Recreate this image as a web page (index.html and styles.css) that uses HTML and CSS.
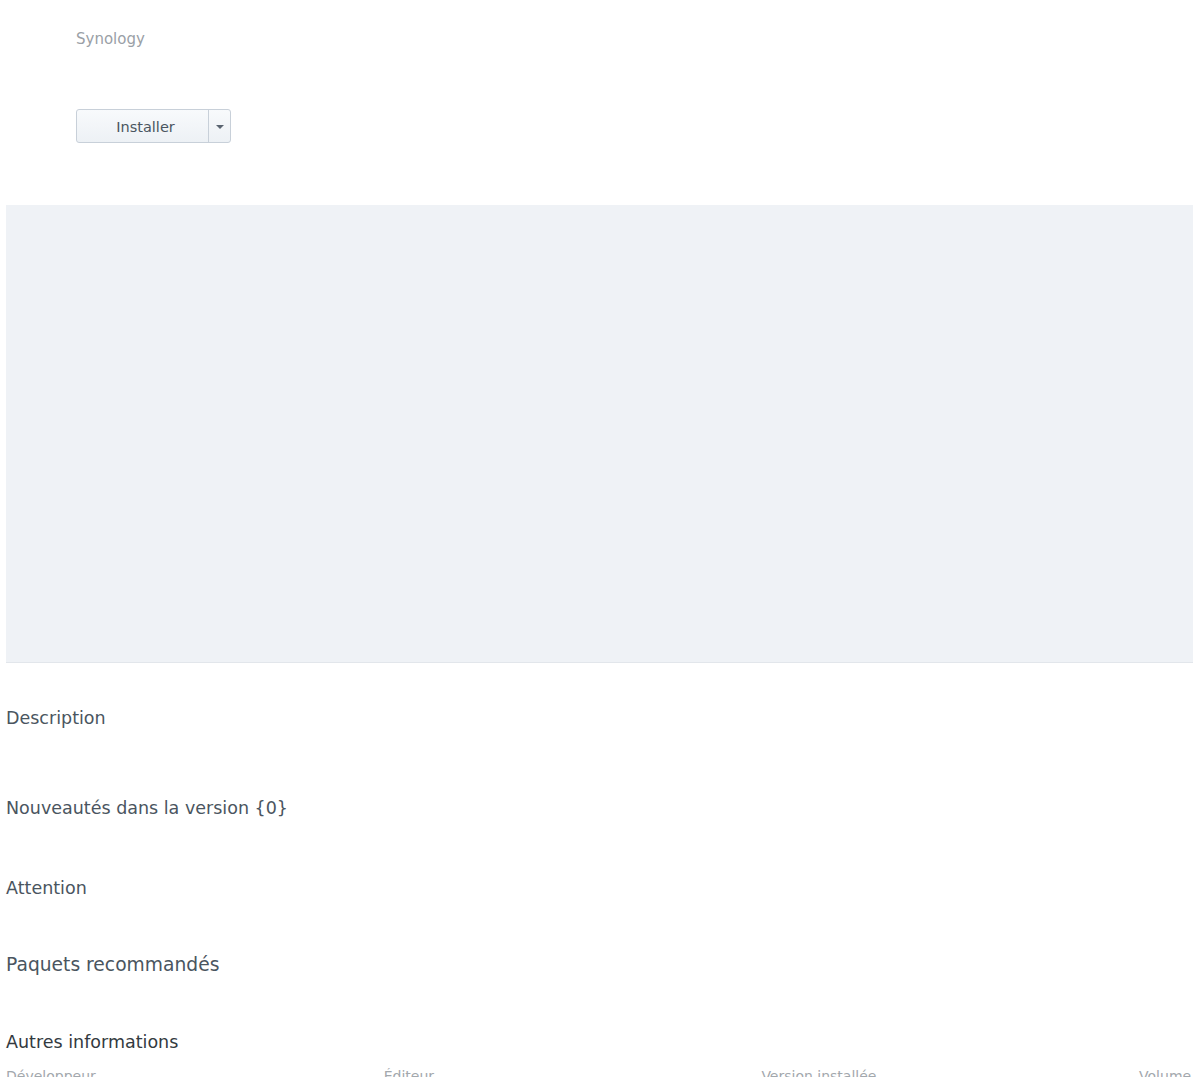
FILE: index.html
```html
<!DOCTYPE html>
<html lang="fr">
<head>
    <title>Synology</title>
    <link rel="stylesheet" href="styles.css">
</head>
<body>
    <div class="head">
        <p class="vendor">Synology</p>
        <div class="split_button">
            <button class="main_action">Installer</button>
            <button class="arrow_action">
                <svg width="8" height="5" viewBox="0 0 8 5"><path d="M0 0 L8 0 L4 4 Z" fill="#5a6470"/></svg>
            </button>
        </div>
    </div>

    <div class="screens"></div>

    <h3 class="section">Description</h3>
    <h3 class="section news">Nouveautés dans la version {0}</h3>
    <h3 class="section attention">Attention</h3>
    <h2 class="recommended">Paquets recommandés</h2>
    <h3 class="other">Autres informations</h3>

    <div class="info_grid">
        <div class="info_label">Développeur</div>
        <div class="info_label">Éditeur</div>
        <div class="info_label">Version installée</div>
        <div class="info_label">Volume</div>
    </div>
</body>
</html>
```

FILE: styles.css
```css
html, body{
    margin:0;
    padding:0;
    overflow:hidden;
}

body{
    background-color:white;
    font-family:"DejaVu Sans", Verdana, sans-serif;
    color:#4a5560;
    padding-left:6px;
}

.head{
    padding-left:70px;
    padding-top:29px;
}

.vendor{
    margin:0;
    font-size:15px;
    line-height:20px;
    color:#9aa0a6;
}

.split_button{
    display:flex;
    margin-top:60px;
    width:155px;
    height:34px;
    box-sizing:border-box;
    border:1px solid #c8d0d9;
    border-radius:3px;
    background:linear-gradient(#f8fafc, #edf1f5);
    overflow:hidden;
}

.split_button button{
    border:none;
    background:transparent;
    margin:0;
    padding:0;
    font-family:inherit;
    color:#4a5560;
}

.main_action{
    width:132px;
    font-size:14.5px;
    padding-left:6px !important;
    padding-top:2px !important;
    border-right:1px solid #c8d0d9 !important;
}

.arrow_action{
    flex:1;
    display:flex;
    align-items:center;
    justify-content:center;
    padding-top:2px !important;
}

.screens{
    margin-top:62px;
    height:457px;
    background-color:#eff2f6;
    border-bottom:1px solid #e2e6eb;
}

.section{
    margin:0;
    font-weight:normal;
    font-size:17.5px;
    line-height:24px;
    margin-top:43px;
}

.news{
    margin-top:66px;
}

.attention{
    margin-top:56px;
}

.recommended{
    margin:0;
    margin-top:53px;
    font-weight:normal;
    font-size:18.7px;
    line-height:24px;
}

.other{
    margin:0;
    margin-top:53px;
    font-weight:normal;
    font-size:17.5px;
    line-height:24px;
    color:#333a40;
}

.info_grid{
    display:grid;
    grid-template-columns:repeat(4, 377.7px);
    margin-top:12px;
}

.info_label{
    font-size:14px;
    line-height:20px;
    color:#a3a8ad;
}
```
